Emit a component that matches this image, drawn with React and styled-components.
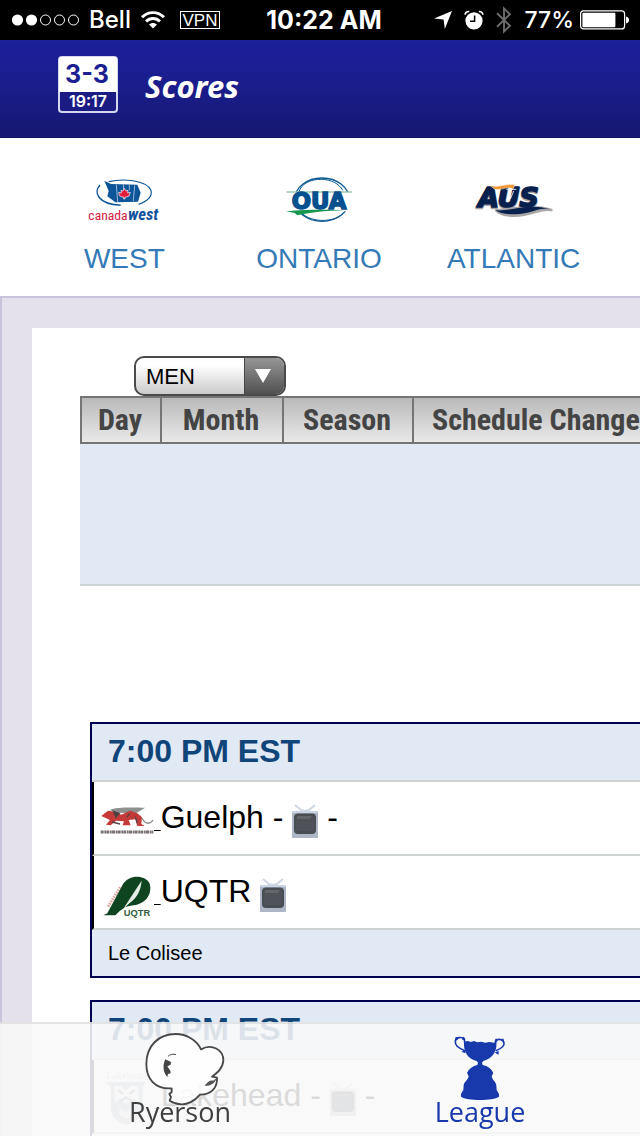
import React from 'react';
import styled, { createGlobalStyle } from 'styled-components';

const GlobalStyle = createGlobalStyle`
  *, *::before, *::after { box-sizing: border-box; }
  html, body { margin: 0; background: #fff; }
  body { font-family: "Liberation Sans", Arial, sans-serif; color: #000; }
  svg { display: block; flex: none; overflow: visible; }
`;

const Shell = styled.div`
  height: 100vh;
  display: flex;
  flex-direction: column;
  overflow: hidden;
`;

/* ---------- status bar ---------- */

const StatusBar = styled.div`
  flex: none;
  height: 40px;
  padding: 0 11px;
  background: #000;
  color: #fff;
  display: grid;
  grid-template-columns: 1fr auto 1fr;
  align-items: center;
  font: 500 24px/40px Inter, "Liberation Sans", sans-serif;
  white-space: nowrap;
`;

const StatusGroup = styled.div`
  display: flex;
  align-items: center;
  justify-content: ${(p) => (p.$end ? 'flex-end' : 'flex-start')};
  gap: ${(p) => p.$gap}px;
`;

const Clock = styled.time`
  font-size: 25px;
  font-weight: 700;
  padding-left: 8px;
`;

const BatteryLevel = styled.span`
  font-size: 23px;
`;

const VpnBadge = styled.span`
  border: 1px solid #fff;
  height: 18px;
  width: 40px;
  text-align: center;
  font: 400 17px/17px "Liberation Sans", Arial, sans-serif;
  margin-left: 5px;
`;

const SignalDots = () => (
  <svg width="68" height="12" viewBox="0 0 68 12">
    {[0, 1, 2, 3, 4].map((i) => (
      <circle
        key={i}
        cx={6.5 + i * 14}
        cy="6"
        r={i < 2 ? 5.6 : 5}
        fill={i < 2 ? '#fff' : 'none'}
        stroke={i < 2 ? 'none' : '#fff'}
      />
    ))}
  </svg>
);

const WifiIcon = () => (
  <svg width="24" height="18" viewBox="0 0 24 18" fill="none" stroke="#fff" strokeWidth="2.9">
    <path d="M1 6.3C7 0 17 0 23 6.3" />
    <path d="M5 10.4C9 6.5 15 6.5 19 10.4" />
    <path d="M12 17.5L8 13.6C10.2 11.5 13.8 11.5 16 13.6Z" fill="#fff" stroke="none" />
  </svg>
);

const LocationIcon = () => (
  <svg width="18" height="18" viewBox="0 0 18 18">
    <path d="M18 0L10.8 18L9.6 8.6L0 7.5Z" fill="#fff" />
  </svg>
);

const AlarmIcon = () => (
  <svg width="20" height="20" viewBox="0 0 20 20">
    <circle cx="10" cy="10.8" r="8.6" fill="#fff" />
    <path d="M10.6 5.5V11.3H6" fill="none" stroke="#000" strokeWidth="1.5" />
    <path d="M1 4.6C1.4 2.6 3 1.4 5.2 1.5M19 4.6C18.6 2.6 17 1.4 14.8 1.5" fill="none" stroke="#fff" strokeWidth="1.7" />
  </svg>
);

const BluetoothIcon = () => (
  <svg width="16" height="28" viewBox="0 0 16 28">
    <path d="M1 7.3L14 19.8L8 25.6V2.4L14 8.2L1 20.7" fill="none" stroke="#6c6c6c" strokeWidth="1.9" />
  </svg>
);

const BatteryIcon = () => (
  <svg width="49" height="20" viewBox="0 0 49 20">
    <rect x="0.6" y="0.9" width="44" height="18" rx="3" fill="none" stroke="#fff" strokeWidth="1.2" />
    <rect x="2.4" y="2.8" width="33" height="14.4" rx="1.2" fill="#fff" />
    <path d="M46 6.6C48 7 49 8.2 49 10C49 11.8 48 13 46 13.4Z" fill="#fff" />
  </svg>
);

/* ---------- app header ---------- */

const Header = styled.header`
  flex: none;
  height: 98px;
  padding: 16px 58px 0;
  display: flex;
  align-items: flex-start;
  gap: 27px;
  background: linear-gradient(#1b1f99, #1a1d8c 45%, #161871);
  border-bottom: 1px solid #121361;
`;

const Title = styled.h1`
  margin: 0;
  color: #fff;
  font: italic 700 31px/60px "Noto Sans", "Open Sans", sans-serif;
`;

const ScoreIcon = () => (
  <svg width="60" height="58" viewBox="0 0 60 58">
    <rect x="1" y="1" width="58" height="55" rx="3" fill="#1b1c83" stroke="#d5d6f0" strokeWidth="2" />
    <path d="M1 36V3Q1 1 3 1H57Q59 1 59 3V36Z" fill="#fff" />
    <g textAnchor="middle" fontFamily='Inter, "Liberation Sans", sans-serif'>
      <text x="29" y="27" fontSize="25" fontWeight="700" fill="#1b1f91">3-3</text>
      <text x="30" y="51" fontSize="16" fontWeight="600" fill="#fff">19:17</text>
    </g>
  </svg>
);

/* ---------- region links ---------- */

const Regions = styled.nav`
  flex: none;
  display: grid;
  grid-template-columns: repeat(3, 1fr);
  padding: 37px 29px 21px 27px;
`;

const RegionLink = styled.a`
  display: flex;
  flex-direction: column;
  align-items: center;
  gap: 20px;
  color: #337ab7;
  font-size: 28px;
  line-height: 32px;
  text-decoration: none;
`;

const CanadaWestLogo = () => (
  <svg width="80" height="48" viewBox="76 44 240 144">
    <g fill="none" stroke="#0b5597">
      <path d="M150 64C190 54 262 58 277 90C282 112 262 124 240 132" strokeWidth="3.5" />
      <path d="M124 74C104 94 116 132 186 135" strokeWidth="4.5" />
    </g>
    <path d="M137 61L157 71L236 73L246 97L238 124L170 126L146 108L150 92Z" fill="#0c5599" />
    <path d="M173 73L177 125M194 72L195 88M212 73V90M228 75L224 122" stroke="#dfeaf5" strokeWidth="2" />
    <path d="M197 84L202 92L208 90L207 98L215 96L211 107L203 110H199V116H195V110H190L182 106L180 96L188 98L187 90L193 92Z" fill="#e21b3c" stroke="#fff" strokeWidth="2" />
    <g fontFamily='"Roboto Condensed", Roboto, sans-serif'>
      <text x="207" y="179" textAnchor="end" fill="#d31c44" fontSize="41">canada</text>
      <text x="208" y="179" fill="#10529a" fontSize="50" fontWeight="700" fontStyle="italic">west</text>
    </g>
  </svg>
);

const OuaLogo = () => (
  <svg width="80" height="48" viewBox="657 44 240 144">
    <g fill="none" stroke="#0b5a92">
      <ellipse cx="786" cy="118" rx="82" ry="65" strokeWidth="4" />
      <path d="M716 96C724 70 750 57 784 57C812 57 838 70 848 90" strokeWidth="3" />
      <path d="M722 152C740 186 820 190 848 160" strokeWidth="3" />
    </g>
    <rect x="672" y="94" width="214" height="59" fill="#fff" />
    <path d="M680 95H876" stroke="#67ae85" strokeWidth="3" />
    <path d="M678 153C750 146 820 148 878 150C820 150 760 154 712 165L704 158Z" fill="#14994c" />
    <text
      x="777"
      y="147"
      textAnchor="middle"
      fontFamily='"DejaVu Sans", sans-serif'
      fontWeight="700"
      fontSize="68"
      fill="#07508f"
      stroke="#07508f"
      strokeWidth="5"
    >
      OUA
    </text>
  </svg>
);

const AusLogo = () => (
  <svg width="80" height="48" viewBox="223 44 240 144">
    <g
      stroke="#a9a5a5"
      strokeWidth="8"
      strokeLinejoin="round"
      fill="#a9a5a5"
      fontFamily='"DejaVu Sans", sans-serif'
      fontWeight="700"
      fontStyle="italic"
      fontSize="80"
    >
      <path d="M290 150C330 150 390 128 455 149C420 142 400 165 345 166C315 166 298 160 290 150Z" />
      <text x="236" y="143">AUS</text>
      <path d="M288 150C330 154 390 126 450 147C415 139 398 161 345 162C315 162 298 158 288 150Z" fill="#08204d" stroke="none" />
      <text x="236" y="141" fill="#08204d" stroke="#08204d" strokeWidth="5">AUS</text>
    </g>
    <path d="M272 76C298 84 318 68 346 74L340 86C322 76 306 92 284 86Z" fill="#f3962c" stroke="#eee" strokeWidth="1.5" />
    <path d="M320 87H350M328 92L332 116L342 92" stroke="#fff" strokeWidth="2.5" fill="none" />
  </svg>
);

/* ---------- schedule ---------- */

const Frame = styled.main`
  flex: 1;
  min-height: 0;
  overflow: hidden;
  border: 2px solid #c9c4dc;
  border-width: 2px 0 0 2px;
  background: #e5e1ec;
  padding: 30px 0 0 30px;
`;

const Sheet = styled.div`
  background: #fff;
  padding: 28px 0 40px 48px;
`;

const SelectBox = styled.label`
  display: flex;
  width: 152px;
  height: 40px;
  margin-left: 54px;
  border: 2px solid #4a4a4a;
  border-radius: 10px;
  overflow: hidden;
  background: linear-gradient(#fff 20%, #cbcbcb);
`;

const Select = styled.select`
  appearance: none;
  flex: 1;
  min-width: 0;
  border: 0;
  padding: 2px 10px 0;
  background: transparent;
  color: #000;
  font: 22px/34px "Liberation Sans", Arial, sans-serif;
`;

const SelectArrow = styled.span`
  width: 40px;
  display: flex;
  align-items: center;
  justify-content: center;
  padding-right: 4px;
  border-left: 1px solid #444;
  background: linear-gradient(#969696, #505050);
`;

const Views = styled.div`
  display: flex;
  height: 48px;
  border: 2px solid #757575;
  border-right: 0;
  overflow: hidden;
`;

const ViewButton = styled.button`
  flex: none;
  width: ${(p) => p.$width}px;
  padding: 0 2px 0 ${(p) => p.$inset || 0}px;
  text-align: ${(p) => (p.$inset ? 'left' : 'center')};
  border: 0;
  border-right: 2px solid #757575;
  background: linear-gradient(#b9b9b9, #e9e9e9);
  color: #444;
  font: 700 30px/44px "Roboto Condensed", Roboto, sans-serif;
  white-space: nowrap;
`;

const DatePanel = styled.div`
  height: 142px;
  background: #e1e9f5;
  border-bottom: 2px solid #ccd3d5;
`;

const Games = styled.div`
  display: flex;
  flex-direction: column;
  gap: 22px;
  padding: 136px 0 0 10px;
`;

const Game = styled.section`
  border: 2px solid #000052;
  border-right: 0;
  padding-bottom: ${(p) => (p.$hasVenue ? 0 : 48)}px;
`;

const GameTime = styled.h2`
  margin: 0;
  padding-left: 16px;
  background: #e1e9f5;
  border-bottom: 2px solid #ccd3d1;
  color: #10457a;
  font-size: 32px;
  line-height: 54px;
  height: 58px;
`;

const TeamRow = styled.div`
  height: 74px;
  display: flex;
  align-items: center;
  padding: 0 0 2px 6px;
  border-left: 2px solid #000;
  border-bottom: 2px solid #ccd3d1;
  font-size: 32px;
  line-height: 36px;
  white-space: pre;
`;

const TeamLink = styled.a`
  display: flex;
  align-items: center;
  color: #000;
  text-decoration: none;
`;

const Underline = styled.span`
  font-size: 24px;
  line-height: 36px;
  text-decoration: underline;
  text-decoration-thickness: 1px;
  text-underline-offset: 5px;
`;

const TvLink = styled.a`
  padding-top: 8px;
`;

const Venue = styled.div`
  padding-left: 16px;
  background: #e1e9f5;
  font-size: 20px;
  line-height: 46px;
`;

const TvIcon = () => (
  <svg width="26" height="34" viewBox="0 0 26 34">
    <path d="M3 1L9 6L13 7L17 6L23 1" fill="none" stroke="#cfd7e3" strokeWidth="2" />
    <rect y="7" width="26" height="27" fill="#adb6c4" />
    <rect y="7" width="26" height="2" fill="#c9d5e4" />
    <rect x="2" y="9.500" width="22" height="20.500" rx="4" fill="#484c53" />
    <rect x="4" y="12" width="18" height="15" rx="2" fill="#4f5258" />
    <path d="M5 12H20L18 15H5Z" fill="#626569" />
  </svg>
);

const GuelphLogo = () => (
  <svg width="54" height="54" viewBox="60 240 162 162">
    <path d="M88 300C110 290 160 292 196 293C184 300 176 304 168 310L112 308Z" fill="#8e9090" />
    <path d="M64 318L84 302L108 306L124 314L150 302L172 310L186 322L184 342L194 348H172L166 328L146 330L152 346H128L132 334L108 332L92 346L78 344L90 330Z" fill="#c33a38" />
    <path d="M100 304L118 310L108 322ZM150 310L140 322M166 320L172 340M96 336L120 342" fill="#464040" stroke="#584444" strokeWidth="4" />
    <path d="M186 324C196 344 210 344 219 330" fill="none" stroke="#8d8888" strokeWidth="4" />
    <path d="M62 366H220" stroke="#77706f" strokeWidth="9" strokeDasharray="9 2 5 1" />
  </svg>
);

const UqtrLogo = () => (
  <svg width="54" height="54" viewBox="60 42 162 162">
    <path d="M84 170L122 110" stroke="#dba9a0" strokeWidth="9" strokeDasharray="5 3" />
    <path d="M70 196L82 190L128 104C146 72 194 74 208 98C218 124 204 160 160 166L138 170L120 182L106 196Z" fill="#0e4420" />
    <path d="M185 92C182 122 172 142 150 158L130 176L168 118Z" fill="#e5eee6" />
    <text x="171" y="197" textAnchor="middle" fontFamily='"Liberation Sans", Arial, sans-serif' fontWeight="700" fontSize="28" fill="#315e42">UQTR</text>
  </svg>
);

const LakeheadLogo = () => (
  <svg width="54" height="54" viewBox="90 234 162 162" opacity="0.6">
    <text x="168" y="268" textAnchor="middle" fontFamily='"Liberation Serif", serif' fontSize="31" fill="#7a8ba0">Lakehead</text>
    <path d="M108 276H226L218 292V360C214 384 192 398 170 404C146 398 126 384 122 360V292Z" fill="#6d8192" />
    <path d="M134 288H152L168 302L184 288H206V338L190 326L168 342L148 326L134 338Z" fill="#e8edf0" />
    <path d="M144 300L160 312M194 300L178 312M150 334L168 322L188 334" fill="none" stroke="#31475c" strokeWidth="7" />
    <path d="M148 350V374L168 388L190 374V350L168 366Z" fill="#ccd5dc" />
  </svg>
);

/* ---------- bottom tabs ---------- */

const TabBar = styled.nav`
  position: fixed;
  left: 0;
  right: 0;
  bottom: 0;
  display: grid;
  grid-template-columns: 1fr 1fr;
  padding: 8px 10px 12px 30px;
  border-top: 2px solid rgba(226, 226, 226, 0.92);
  background: rgba(248, 248, 248, 0.88);
  background-clip: padding-box;
`;

const Tab = styled.a`
  display: flex;
  flex-direction: column;
  align-items: center;
  color: ${(p) => (p.$active ? '#1839ac' : '#3f3f3f')};
  font: 27px/24px "Open Sans", "Noto Sans", sans-serif;
  text-decoration: none;
`;

const TabLabel = styled.span`
  margin-top: -4px;
  z-index: 1;
`;

const RamIcon = () => (
  <svg width="90" height="72" viewBox="195 126 270 216">
    <path
      d="M305 295C254 298 229 266 229 222C229 168 265 132 317 132C350 132 380 150 393 178C424 160 461 178 460 212C458 236 442 248 426 260L441 263C443 292 424 314 390 314C374 334 350 344 334 343C320 342 308 338 299 332L303 321L298 312L305 306Z"
      fill="#fff"
      fillOpacity="0.8"
      stroke="#484848"
      strokeWidth="5.500"
      strokeLinejoin="round"
    />
    <path d="M294 199C300 193 309 191 318 194" fill="none" stroke="#484848" strokeWidth="3" />
    <path d="M286 208L303 216L302 224L292 229L301 242L302 250L294 252L292 261C278 246 278 224 286 208Z" fill="#444" />
    <path d="M404 288C411 276 420 270 429 272L441 264C434 280 424 288 404 288Z" fill="#555" />
  </svg>
);

const TrophyIcon = () => (
  <svg width="90" height="72" viewBox="135 66 270 216" fill="#1839ac">
    <path d="M222 95L234 93L242 96L252 93L262 97L274 95L286 98L298 96L312 98L319 95C322 124 308 144 280 153L276 158L278 165C294 168 304 176 310 189L305 199C307 210 317 214 319 226L320 240L327 252V260C310 273 230 273 213 260V252L220 240L221 226C222 216 233 212 236 199L231 188C237 176 248 168 262 165L264 158L260 153C234 146 220 126 222 95Z" />
    <path d="M225 122C209 116 194 106 196 93C198 81 215 80 223 87L224 98M317 122C333 116 344 110 342 99C340 86 324 86 317 92L316 101" fill="none" stroke="#1839ac" strokeWidth="5" />
    <path d="M197 81H203V90H195ZM217 81H223V90H217ZM316 86H322V95H316ZM335 86H341V94H335ZM214 125L226 120V130ZM314 128L326 122V134Z" />
  </svg>
);

/* ---------- data ---------- */

const regions = [
  { name: 'WEST', Logo: CanadaWestLogo },
  { name: 'ONTARIO', Logo: OuaLogo },
  { name: 'ATLANTIC', Logo: AusLogo },
];

const games = [
  {
    time: '7:00 PM EST',
    venue: 'Le Colisee',
    teams: [
      { name: 'Guelph - ', after: ' -', Logo: GuelphLogo },
      { name: 'UQTR ', after: '', Logo: UqtrLogo },
    ],
  },
  {
    time: '7:00 PM EST',
    teams: [{ name: 'Lakehead - ', after: ' -', Logo: LakeheadLogo }],
  },
];

const Team = ({ name, after, Logo }) => (
  <TeamRow>
    <TeamLink href="#team">
      <Logo />
      <Underline>&nbsp;</Underline>
    </TeamLink>
    <span>{name}</span>
    <TvLink href="#watch" aria-label="Watch">
      <TvIcon />
    </TvLink>
    <span>{after}</span>
  </TeamRow>
);

export default function App() {
  return (
    <Shell>
      <GlobalStyle />
      <StatusBar>
        <StatusGroup $gap={10}>
          <SignalDots />
          <span>Bell</span>
          <WifiIcon />
          <VpnBadge>VPN</VpnBadge>
        </StatusGroup>
        <Clock>10:22 AM</Clock>
        <StatusGroup $end $gap={12}>
          <LocationIcon />
          <AlarmIcon />
          <BluetoothIcon />
          <StatusGroup $gap={6}>
            <BatteryLevel>77%</BatteryLevel>
            <BatteryIcon />
          </StatusGroup>
        </StatusGroup>
      </StatusBar>

      <Header>
        <ScoreIcon />
        <Title>Scores</Title>
      </Header>

      <Regions>
        {regions.map(({ name, Logo }) => (
          <RegionLink key={name} href={`#${name.toLowerCase()}`}>
            <Logo />
            <span>{name}</span>
          </RegionLink>
        ))}
      </Regions>

      <Frame>
        <Sheet>
          <SelectBox>
            <Select aria-label="League" defaultValue="MEN">
              <option>MEN</option>
            </Select>
            <SelectArrow>
              <svg width="16" height="14" viewBox="0 0 16 14">
                <path d="M0 0H16L8 14Z" fill="#fff" />
              </svg>
            </SelectArrow>
          </SelectBox>
          <Views>
            <ViewButton $width={80}>Day</ViewButton>
            <ViewButton $width={122}>Month</ViewButton>
            <ViewButton $width={130}>Season</ViewButton>
            <ViewButton $width={260} $inset={18}>Schedule Changes</ViewButton>
          </Views>
          <DatePanel />
          <Games>
            {games.map((game, i) => (
              <Game key={i} $hasVenue={Boolean(game.venue)}>
                <GameTime>{game.time}</GameTime>
                {game.teams.map((team) => (
                  <Team key={team.name} {...team} />
                ))}
                {game.venue && <Venue>{game.venue}</Venue>}
              </Game>
            ))}
          </Games>
        </Sheet>
      </Frame>

      <TabBar>
        <Tab href="#ryerson">
          <RamIcon />
          <TabLabel>Ryerson</TabLabel>
        </Tab>
        <Tab href="#league" $active>
          <TrophyIcon />
          <TabLabel>League</TabLabel>
        </Tab>
      </TabBar>
    </Shell>
  );
}
